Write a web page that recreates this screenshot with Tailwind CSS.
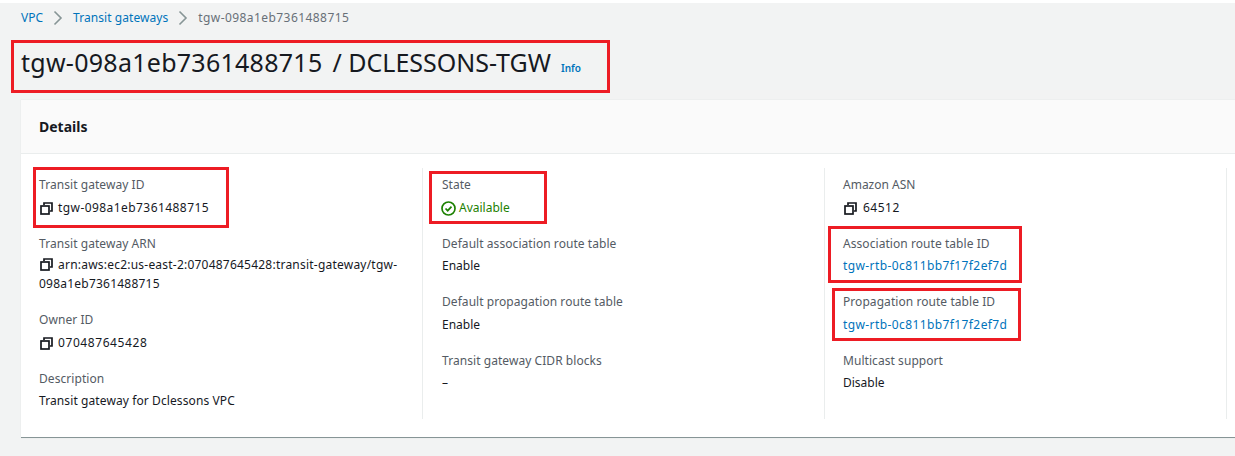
<!DOCTYPE html>
<html>
<head>
<script src="https://cdn.jsdelivr.net/npm/@tailwindcss/browser@4"></script>
</head>
<body class="m-0 bg-white">
<div class="relative w-[1235px] h-[456px] overflow-hidden bg-white font-['Noto_Sans','Open_Sans',sans-serif] text-[12px] text-[#16191f]">
  <div class="h-[453px] mt-[3px] bg-[#f2f3f3] pl-[21px]">
    <nav class="h-[29px] flex items-center text-[12px]">
      <a class="text-[#0073bb]">VPC</a>
      <svg class="w-[16px] h-[16px] mx-[7px]" viewBox="0 0 16 16" fill="none" stroke="#879596" stroke-width="1.6"><path d="M4.5 1.5 11 8l-6.500 6.500"/></svg>
      <a class="text-[#0073bb] tracking-[0.06px]">Transit gateways</a>
      <svg class="w-[16px] h-[16px] mx-[7px]" viewBox="0 0 16 16" fill="none" stroke="#879596" stroke-width="1.6"><path d="M4.500 1.500 11 8l-6.500 6.500"/></svg>
      <span class="text-[#687078] tracking-[0.43px]">tgw-098a1eb7361488715</span>
    </nav>
    <div class="h-[68px] flex items-center pb-[8px]">
      <h1 class="text-[25px] leading-[30px] font-normal text-[#16191f]"><span class="tracking-[0.27px] mr-[3.500px]">tgw-098a1eb7361488715</span> / DCLESSONS-TGW</h1>
      <a class="ml-[10px] mt-[13px] text-[10px] font-semibold text-[#0073bb]">Info</a>
    </div>
    <section class="w-[1300px] h-[338px] bg-white border-b border-[#879596] shadow-[0_0_1px_#d5dbdb]">
      <header class="h-[54px] bg-[#fafafa] border-b border-[#eaeded] flex items-center pl-[18px]">
        <h2 class="text-[14px] font-bold text-[#16191f]">Details</h2>
      </header>
      <div class="flex pt-[14px] text-[12px]">
        <div class="w-[402px] h-[251px] pt-[7px] pl-[18px] pr-[20px] border-r border-[#eaeded] flex flex-col">
          <div class="h-[59px]">
            <p class="text-[#545b64] leading-[20px] mb-[3px] tracking-[0.06px]">Transit gateway ID</p>
            <p class="flex items-center h-[20px] tracking-[0.43px]"><svg class="w-[13px] h-[13px] ml-[1px] mr-[5px] shrink-0" viewBox="0 0 13 13" fill="none" stroke="#16191f" stroke-width="1.700"><path d="M4 3V1h8v8h-2"/><rect x="1" y="4" width="8" height="8"/></svg>tgw-098a1eb7361488715</p>
          </div>
          <div class="h-[76px]">
            <p class="text-[#545b64] leading-[20px] mb-[2px] tracking-[0.06px]">Transit gateway ARN</p>
            <p class="leading-[18.500px] break-words tracking-[0.22px]"><svg class="inline w-[13px] h-[13px] ml-[1px] mr-[5px] -mt-[2px]" viewBox="0 0 13 13" fill="none" stroke="#16191f" stroke-width="1.700"><path d="M4 3V1h8v8h-2"/><rect x="1" y="4" width="8" height="8"/></svg>arn:aws:ec2:us-east-2:070487645428:transit-gateway/tgw-098a1eb7361488715</p>
          </div>
          <div class="h-[59px]">
            <p class="text-[#545b64] leading-[20px] mb-[3px] tracking-[0.06px]">Owner ID</p>
            <p class="flex items-center h-[20px] tracking-[0.58px]"><svg class="w-[13px] h-[13px] ml-[1px] mr-[5px] shrink-0" viewBox="0 0 13 13" fill="none" stroke="#16191f" stroke-width="1.700"><path d="M4 3V1h8v8h-2"/><rect x="1" y="4" width="8" height="8"/></svg>070487645428</p>
          </div>
          <div>
            <p class="text-[#545b64] leading-[20px] mb-[2px] tracking-[0.06px]">Description</p>
            <p class="leading-[20px] tracking-[0.1px]">Transit gateway for Dclessons VPC</p>
          </div>
        </div>
        <div class="w-[402px] h-[251px] pt-[7px] pl-[19px] border-r border-[#eaeded] flex flex-col">
          <div class="h-[59px]">
            <p class="text-[#545b64] leading-[20px] mb-[3px]">State</p>
            <p class="flex items-center h-[20px] text-[#1d8102]"><svg class="w-[15px] h-[15px] -ml-[1px] mr-[3px] shrink-0" viewBox="0 0 15 15" fill="none" stroke="#1d8102" stroke-width="1.700"><circle cx="7.500" cy="7.500" r="6.500"/><path d="m4.500 7.500 2.200 2.200 3.800-4"/></svg>Available</p>
          </div>
          <div class="h-[58px]">
            <p class="text-[#545b64] leading-[20px] mb-[2px] tracking-[0.06px]">Default association route table</p>
            <p class="leading-[20px]">Enable</p>
          </div>
          <div class="h-[59px]">
            <p class="text-[#545b64] leading-[20px] mb-[3px] tracking-[0.06px]">Default propagation route table</p>
            <p class="leading-[20px]">Enable</p>
          </div>
          <div>
            <p class="text-[#545b64] leading-[20px] mb-[2px] tracking-[0.06px]">Transit gateway CIDR blocks</p>
            <p class="leading-[20px]">–</p>
          </div>
        </div>
        <div class="w-[402px] h-[251px] pt-[7px] pl-[18px] border-r border-[#eaeded] flex flex-col">
          <div class="h-[59px]">
            <p class="text-[#545b64] leading-[20px] mb-[3px]">Amazon ASN</p>
            <p class="flex items-center h-[20px] tracking-[0.5px]"><svg class="w-[13px] h-[13px] mr-[6px] ml-[1px] shrink-0" viewBox="0 0 13 13" fill="none" stroke="#16191f" stroke-width="1.700"><path d="M4 3V1h8v8h-2"/><rect x="1" y="4" width="8" height="8"/></svg>64512</p>
          </div>
          <div class="h-[58px]">
            <p class="text-[#545b64] leading-[20px] mb-[2px] tracking-[0.06px]">Association route table ID</p>
            <a class="block leading-[20px] text-[#0073bb] tracking-[0.4px]">tgw-rtb-0c811bb7f17f2ef7d</a>
          </div>
          <div class="h-[59px]">
            <p class="text-[#545b64] leading-[20px] mb-[3px] tracking-[0.06px]">Propagation route table ID</p>
            <a class="block leading-[20px] text-[#0073bb] tracking-[0.4px]">tgw-rtb-0c811bb7f17f2ef7d</a>
          </div>
          <div>
            <p class="text-[#545b64] leading-[20px] mb-[2px] tracking-[0.06px]">Multicast support</p>
            <p class="leading-[20px]">Disable</p>
          </div>
        </div>
      </div>
    </section>
  </div>
  <!-- red annotation boxes drawn over the screenshot -->
  <div class="absolute left-[11px] top-[40px] w-[599px] h-[53px] border-[3px] border-[#ed1c24]"></div>
  <div class="absolute left-[33px] top-[167px] w-[196px] h-[61px] border-[3px] border-[#ed1c24]"></div>
  <div class="absolute left-[429px] top-[171px] w-[118px] h-[53px] border-[3px] border-[#ed1c24]"></div>
  <div class="absolute left-[828px] top-[226px] w-[194px] h-[57px] border-[3px] border-[#ed1c24]"></div>
  <div class="absolute left-[832px] top-[288px] w-[189px] h-[53px] border-[3px] border-[#ed1c24]"></div>
</div>
</body>
</html>
